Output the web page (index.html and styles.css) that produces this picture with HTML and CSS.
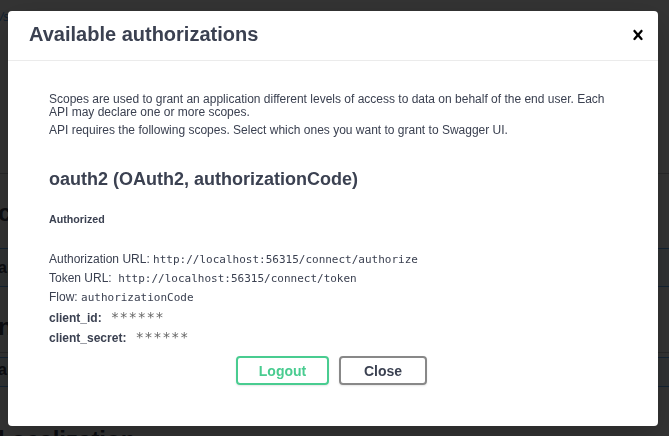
FILE: index.html
```
<!DOCTYPE html>
<html>
<head>
<meta charset="utf-8">
<link rel="stylesheet" href="styles.css">
</head>
<body>
<div class="page">
  <div class="top-link">/swagger/v1/swagger.json</div>
  <section class="tag">
    <h3 class="tag-title">connect</h3>
    <div class="op">api/connect</div>
  </section>
  <section class="tag second">
    <h3 class="tag-title">n Localization</h3>
    <div class="op small">api/localization</div>
  </section>
  <h3 class="tag-title last">l ocalization</h3>
</div>
<div class="backdrop"></div>
<div class="modal">
  <div class="modal-header">
    <h3 class="modal-title">Available authorizations</h3>
    <button class="close-btn" aria-label="Close">
      <svg width="20" height="20" viewBox="0 0 20 20"><path d="M14.348 14.849c-.469.469-1.229.469-1.697 0L10 11.819l-2.651 3.029c-.469.469-1.229.469-1.697 0-.469-.469-.469-1.229 0-1.697l2.758-3.150-2.759-3.152c-.469-.469-.469-1.228 0-1.697.469-.469 1.228-.469 1.697 0L10 8.183l2.651-3.031c.469-.469 1.228-.469 1.697 0 .469.469.469 1.229 0 1.697l-2.758 3.152 2.758 3.150c.469.469.469 1.229 0 1.698z"/></svg>
    </button>
  </div>
  <div class="modal-content">
    <div class="auth-container">
      <p class="desc">Scopes are used to grant an application different levels of access to data on behalf of the end user. Each API may declare one or more scopes.</p>
      <p class="desc">API requires the following scopes. Select which ones you want to grant to Swagger UI.</p>
      <h4 class="scheme-title">oauth2 (OAuth2, authorizationCode)</h4>
      <h6 class="status">Authorized</h6>
      <p class="info first">Authorization URL: <code>http://localhost:56315/connect/authorize</code></p>
      <p class="info">Token URL:<code> http://localhost:56315/connect/token</code></p>
      <p class="info">Flow: <code>authorizationCode</code></p>
      <div class="field"><span class="label">client_id:</span><code class="mask">******</code></div>
      <div class="field"><span class="label">client_secret:</span><code class="mask">******</code></div>
      <div class="btn-row">
        <button class="btn logout">Logout</button>
        <button class="btn close">Close</button>
      </div>
    </div>
  </div>
</div>
</body>
</html>
```
FILE: styles.css
```
html, body {
  margin: 0;
  padding: 0;
  background: #fff;
  font-family: "Liberation Sans", Arial, sans-serif;
  color: #3b4151;
  overflow: hidden;
  height: 436px;
}
.page {
  padding: 10px 0 0 0;
  margin-left: -2px;
  height: 426px;
  overflow: hidden;
}
.top-link {
  font-size: 12px;
  line-height: 14px;
  color: #4990e2;
  font-style: italic;
  padding-left: 2px;
  height: 163px;
  border-bottom: 1px solid rgba(59,65,81,.3);
}
.tag-title {
  font-size: 24px;
  font-weight: 700;
  margin: 0;
  line-height: 30px;
  box-sizing: border-box;
  white-space: nowrap;
}
.tag > .tag-title {
  height: 74px;
  padding-top: 24px;
}
.tag.second > .tag-title {
  height: 66px;
  padding-top: 25px;
  border-bottom: 1px solid rgba(59,65,81,.3);
}
.tag-title.last {
  margin-top: 38px;
}
.op {
  border-top: 1px solid #61affe;
  border-bottom: 1px solid #61affe;
  background: rgba(97,175,254,.1);
  height: 37px;
  line-height: 37px;
  font-size: 16px;
  font-weight: 700;
  white-space: nowrap;
}
.op.small {
  margin-top: 4px;
  height: 28px;
  line-height: 24px;
}
.backdrop {
  position: fixed;
  inset: 0;
  background: rgba(0,0,0,.8);
}
.modal {
  position: fixed;
  left: 8px;
  top: 11px;
  width: 650px;
  height: 415px;
  background: #fff;
  border-radius: 4px;
  box-shadow: 0 10px 30px 0 rgba(0,0,0,.2);
  box-sizing: border-box;
  display: flex;
  flex-direction: column;
}
.modal-header {
  display: flex;
  align-items: center;
  justify-content: space-between;
  height: 50px;
  box-sizing: border-box;
  border-bottom: 1px solid #ebebeb;
  padding: 0 10px 0 21px;
}
.modal-title {
  margin: 0;
  font-size: 20px;
  font-weight: 700;
  color: #3b4151;
  position: relative;
  top: -1px;
}
.close-btn {
  border: 0;
  background: none;
  padding: 0;
  width: 20px;
  height: 20px;
  margin-top: -2px;
  display: flex;
}
.close-btn svg { fill: #000; }
.modal-content {
  padding: 32px 20px 0 41px;
}
.desc {
  margin: 0 0 5px;
  font-size: 12px;
  line-height: 13px;
  color: #3b4151;
  max-width: 566px;
}
.scheme-title {
  margin: 31px 0 0;
  font-size: 18px;
  font-weight: 700;
  line-height: 22px;
  color: #3b4151;
}
.status {
  margin: 23px 0 0;
  font-size: 10.7px;
  font-weight: 700;
  line-height: 13px;
  color: #3b4151;
}
.info {
  margin: 5px 0 0;
  font-size: 12px;
  line-height: 14px;
  height: 14px;
  color: #3b4151;
}
.info.first { margin-top: 26px; }
.info code {
  font-family: "DejaVu Sans Mono", monospace;
  font-size: 11px;
  line-height: 14px;
}
.field {
  margin-top: 6px;
  font-size: 12px;
  line-height: 14px;
  height: 14px;
  display: flex;
  align-items: baseline;
}
.field + .field { margin-top: 6px; }
.label {
  font-weight: 700;
  margin-right: 9px;
}
.mask {
  font-family: "DejaVu Sans Mono", monospace;
  font-size: 14px;
  letter-spacing: 0.5px;
  color: #666;
}
.btn-row {
  display: flex;
  justify-content: center;
  gap: 10px;
  margin-top: 12px;
  padding-right: 24px;
}
.btn {
  font-family: "Liberation Sans", Arial, sans-serif;
  font-size: 14px;
  font-weight: 700;
  background: transparent;
  border: 2px solid #888;
  border-radius: 4px;
  box-shadow: 0 1px 2px rgba(0,0,0,.1);
  height: 29px;
  padding: 0;
  color: #3b4151;
}
.btn.logout {
  width: 93px;
  border-color: #49cc90;
  color: #49cc90;
}
.btn.close {
  width: 88px;
}
```
